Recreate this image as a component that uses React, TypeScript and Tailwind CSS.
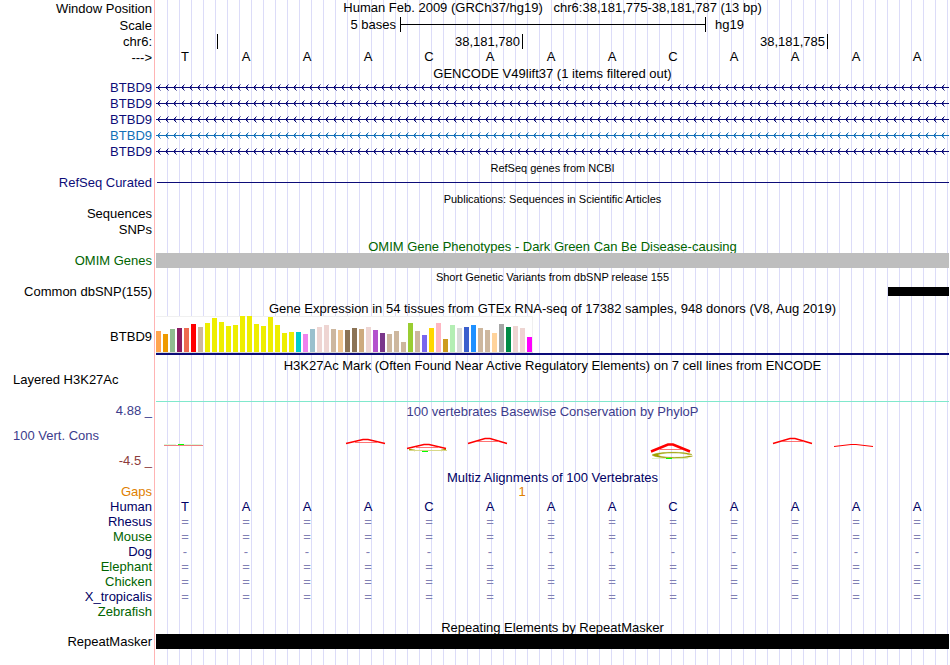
import type { ReactNode } from 'react';
import clsx from 'clsx';

type TrackRowProps = {
  label?: ReactNode;
  labelClass?: string;
  height?: string;
  children?: ReactNode;
};

type Mark = {
  peak?: [top: number, bottom: number, stroke: number];
  bar?: number;
  extra?: 'flat' | 'line' | 'ring';
};

const BASES = ['T', 'A', 'A', 'A', 'C', 'A', 'A', 'A', 'C', 'A', 'A', 'A', 'A'];

const GENCODE_ITEMS = [
  { id: 1, text: 'text-[#0c0c78]' },
  { id: 2, text: 'text-[#0c0c78]' },
  { id: 3, text: 'text-[#0c0c78]' },
  { id: 4, text: 'text-[#1270b8]' },
  { id: 5, text: 'text-[#0c0c78]' },
];

const SPECIES = [
  { name: 'Rhesus', symbol: '=', text: 'text-[#000064]' },
  { name: 'Mouse', symbol: '=', text: 'text-[#006400]' },
  { name: 'Dog', symbol: '-', text: 'text-[#000064]' },
  { name: 'Elephant', symbol: '=', text: 'text-[#006400]' },
  { name: 'Chicken', symbol: '=', text: 'text-[#006400]' },
  { name: 'X_tropicalis', symbol: '=', text: 'text-[#000064]' },
  { name: 'Zebrafish', symbol: '', text: 'text-[#006400]' },
];

// [height, color] for each tissue
const TISSUES: Array<[number, string]> = [
  [21, '#ffa54f'], [18, '#ee9a00'], [23, '#8fbc8f'], [24, '#8b1c62'], [24, '#ee6a50'], [28, '#ff0000'],
  [25, '#cdb79e'], [29, '#eeee00'], [34, '#eeee00'], [30, '#eeee00'], [26, '#eeee00'], [27, '#eeee00'],
  [36, '#eeee00'], [36, '#eeee00'], [28, '#eeee00'], [26, '#eeee00'], [35, '#eeee00'], [27, '#eeee00'],
  [19, '#eeee00'], [20, '#eeee00'], [20, '#00cdcd'], [18, '#ee82ee'], [23, '#9ac0cd'], [25, '#eed5d2'],
  [27, '#eed5d2'], [23, '#cdb79e'], [22, '#eec591'], [22, '#8b7355'], [24, '#8b7355'], [23, '#cdaa7d'],
  [25, '#eed5d2'], [22, '#b452cd'], [19, '#7a378b'], [18, '#cdb79e'], [21, '#cdb79e'], [10, '#cdb79e'],
  [29, '#9acd32'], [21, '#cdb79e'], [17, '#7a67ee'], [24, '#ffd700'], [29, '#ffb6c1'], [13, '#cd9b1d'],
  [27, '#b4eeb4'], [24, '#d9d9d9'], [25, '#3a5fcd'], [27, '#1e90ff'], [24, '#cdb79e'], [22, '#cdb79e'],
  [19, '#ffd39b'], [28, '#a6a6a6'], [25, '#008b45'], [26, '#eed5d2'], [24, '#eed5d2'], [15, '#ff00ff'],
];

const CONSERVATION: Record<number, Mark> = {
  0: { extra: 'flat' },
  3: { peak: [3, 7, 1.5], bar: 6.5 },
  4: { peak: [8, 12, 1.5], bar: 11.5, extra: 'line' },
  5: { peak: [2, 7, 1.5], bar: 5.5 },
  8: { peak: [8, 15, 2.5], bar: 13.5, extra: 'ring' },
  10: { peak: [2, 7, 1.5], bar: 5.5 },
  11: { peak: [8, 10, 1] },
};

function TrackRow({ label, labelClass, height, children }: TrackRowProps) {
  return (
    <div className={clsx('flex', height)}>
      <div className={clsx('flex w-[154px] shrink-0 items-start justify-end pr-0.5', labelClass)}>{label}</div>
      <div className="min-w-0 grow border-l border-[#ffb4b4] px-px">
        <div className="h-full bg-[repeating-linear-gradient(to_right,transparent_0_11px,#dcdcf8_11px_12px)]">
          {children}
        </div>
      </div>
    </div>
  );
}

function TitleRow({ small, className, children }: { small?: boolean; className?: string; children: ReactNode }) {
  return (
    <TrackRow height="h-[15px]">
      <h2 className={clsx('text-center leading-[17px] whitespace-pre', small && 'text-[11px]', className)}>
        {children}
      </h2>
    </TrackRow>
  );
}

function BaseCells({ cells, className }: { cells: string[]; className?: string }) {
  return (
    <div className={clsx('grid grid-cols-13 text-center', className)}>
      {cells.map((cell, i) => (
        <span key={i} className="pr-[3px]">
          {cell}
        </span>
      ))}
    </div>
  );
}

function IntronLine({ id }: { id: number }) {
  return (
    <svg className="block h-4 w-full" shapeRendering="crispEdges" aria-hidden="true">
      <defs>
        <pattern id={`chevrons-${id}`} width="8" height="16" patternUnits="userSpaceOnUse">
          <path d="M2 6h1v1h-1z M2 8h1v1h-1z M3 5h1v1h-1z M3 9h1v1h-1z" fill="currentColor" />
          <path d="M4 4h1v1h-1z M4 10h1v1h-1z M3 6h1v1h-1z M3 8h1v1h-1z" fill="currentColor" fillOpacity="0.5" />
        </pattern>
      </defs>
      <rect width="100%" height="16" fill={`url(#chevrons-${id})`} />
      <rect y="7" width="100%" height="1" fill="currentColor" />
    </svg>
  );
}

function ConservationMark({ mark }: { mark?: Mark }) {
  if (!mark) return <span />;

  return (
    <svg width="54" height="24" viewBox="0 0 54 24" className="block" aria-hidden="true">
      {mark.extra === 'flat' && (
        <>
          <path d="M8 9.5 H47" stroke="#f08080" strokeWidth="1" />
          <path d="M8 8.5 H20 M28 8.5 H46" stroke="#d8f8d8" strokeWidth="1" />
          <path d="M22 8.5 H28" stroke="#00ff00" strokeWidth="1" />
        </>
      )}
      {mark.extra === 'line' && (
        <>
          <path d="M9 13.5 L15 14.5 M41 14.5 L46 13.5" stroke="#a0a000" strokeWidth="1.5" />
          <path d="M9 14.5 H47" stroke="#d8d888" strokeWidth="1" />
          <path d="M22 15.5 H28" stroke="#00ff00" strokeWidth="1" />
        </>
      )}
      {mark.extra === 'ring' && (
        <>
          <path
            d="M48 18.5 C42 15.5 13 15.5 8 19 C13 23 42 23 48.5 20 L45 20 C40 22 16 22 14 19 C16 16.5 38 16.5 44 18.5 Z"
            fill="#a0a000"
            stroke="#a0a000"
            strokeWidth="0.4"
          />
          <path d="M8 22.5 H44" stroke="#c8f0a0" strokeWidth="0.6" />
          <path d="M22 22.5 H28" stroke="#00ff00" strokeWidth="1" />
        </>
      )}
      {mark.peak && (
        <polyline
          points={`7,${mark.peak[1] + 0.5} 24,${mark.peak[0] + 0.5} 29,${mark.peak[0] + 0.5} 46,${mark.peak[1] + 0.5}`}
          fill="none"
          stroke="#ff0000"
          strokeWidth={mark.peak[2]}
        />
      )}
      {mark.bar && <path d={`M16 ${mark.bar} H38`} stroke="#ff5050" strokeWidth="0.8" />}
    </svg>
  );
}

export default function App() {
  return (
    <main className="flex min-h-screen flex-col overflow-hidden bg-white font-['Liberation_Sans',Arial,sans-serif] text-[13px] leading-[15px] text-black">
      <TrackRow label="Window Position" labelClass="items-center!" height="h-[17px]">
        <h1 className="text-center whitespace-pre">Human Feb. 2009 (GRCh37/hg19)   chr6:38,181,775-38,181,787 (13 bp)</h1>
      </TrackRow>

      <TrackRow label="Scale" labelClass="items-center!" height="h-[17px]">
        <div className="grid grid-cols-13">
          <span className="col-span-4 pr-1 text-right">5 bases</span>
          <div className="col-span-5 -mr-px flex items-center border-x border-black">
            <div className="h-px w-full bg-black" />
          </div>
          <span className="col-span-4 pl-2.5">hg19</span>
        </div>
      </TrackRow>

      <TrackRow label="chr6:" height="h-[15px]">
        <div className="grid grid-cols-13">
          <span className="col-start-2 border-l border-black" />
          <span className="col-span-4 pr-0.5 text-right">38,181,780</span>
          <span className="col-span-5 border-l border-black pr-0.5 text-right">38,181,785</span>
          <span className="col-span-2 border-l border-black" />
        </div>
      </TrackRow>

      <TrackRow label="--->" labelClass="items-center!" height="h-4">
        <BaseCells cells={BASES} />
      </TrackRow>

      <TitleRow>GENCODE V49lift37 (1 items filtered out)</TitleRow>
      {GENCODE_ITEMS.map((item) => (
        <TrackRow key={item.id} label="BTBD9" labelClass={item.text} height="h-4">
          <div className={item.text}>
            <IntronLine id={item.id} />
          </div>
        </TrackRow>
      ))}

      <TitleRow small>RefSeq genes from NCBI</TitleRow>
      <TrackRow label="RefSeq Curated" labelClass="text-[#0c0c78]" height="h-4">
        <div className="flex h-[15px] items-center pl-px">
          <div className="h-px w-full bg-[#0c0c78]" />
        </div>
      </TrackRow>

      <TitleRow small>Publications: Sequences in Scientific Articles</TitleRow>
      <TrackRow label="Sequences" height="h-4" />
      <TrackRow label="SNPs" height="h-4" />

      <TitleRow className="text-[#006400]">OMIM Gene Phenotypes - Dark Green Can Be Disease-causing</TitleRow>
      <TrackRow label="OMIM Genes" labelClass="text-[#006400]" height="h-4">
        <div className="h-[15px] bg-[#bebebe]" />
      </TrackRow>

      <TitleRow small>Short Genetic Variants from dbSNP release 155</TitleRow>
      <TrackRow label="Common dbSNP(155)" height="h-4">
        <div className="grid grid-cols-13 pt-[3px]">
          <div className="col-start-13 h-[9px] bg-black" />
        </div>
      </TrackRow>

      <TrackRow height="h-4">
        <h2 className="text-center leading-[17px]">
          Gene Expression in 54 tissues from GTEx RNA-seq of 17382 samples, 948 donors (V8, Aug 2019)
        </h2>
      </TrackRow>
      <TrackRow label="BTBD9" labelClass="items-center!" height="h-[41px]">
        <div className="flex h-[37px] w-[377px] items-end gap-0.5 border-b border-[#d8d8d8] bg-white shadow-[inset_-1px_1px_#f0f0f0]">
          {TISSUES.map(([height, color], i) => (
            <div key={i} className="w-[5px]" style={{ height, backgroundColor: color }} />
          ))}
        </div>
        <div className="h-0.5 bg-[#0c0c78]" />
      </TrackRow>

      <TitleRow>H3K27Ac Mark (Often Found Near Active Regulatory Elements) on 7 cell lines from ENCODE</TitleRow>
      <TrackRow label="Layered H3K27Ac" labelClass="justify-start! pl-[13px]" height="h-[30px]">
        <div className="flex h-full items-end">
          <div className="h-px w-full bg-[#80e8cc]" />
        </div>
      </TrackRow>

      <TrackRow
        labelClass="flex-col items-stretch! gap-[10px] justify-start! pt-px pl-[13px]"
        label={
          <>
            <span className="text-right text-[#3c3c8c]">4.88 _</span>
            <span className="text-[#3c3c8c]">100 Vert. Cons</span>
            <span className="text-right text-[#8c3c3c]">-4.5 _</span>
          </>
        }
        height="h-[67px]"
      >
        <h2 className="pt-0.5 text-center text-[#3c3c8c]">100 vertebrates Basewise Conservation by PhyloP</h2>
        <div className="grid grid-cols-13 pt-[17px]">
          {BASES.map((_, i) => (
            <ConservationMark key={i} mark={CONSERVATION[i]} />
          ))}
        </div>
      </TrackRow>

      <TitleRow className="text-[#000064]">Multiz Alignments of 100 Vertebrates</TitleRow>
      <TrackRow label="Gaps" labelClass="text-[#e08000]" height="h-[15px]">
        <div className="grid grid-cols-13 text-center text-[#e08000]">
          <span className="col-span-2 col-start-6">1</span>
        </div>
      </TrackRow>
      <TrackRow label="Human" labelClass="text-[#000064]" height="h-[15px]">
        <BaseCells cells={BASES} className="text-[#000064]" />
      </TrackRow>
      {SPECIES.map((species) => (
        <TrackRow key={species.name} label={species.name} labelClass={species.text} height="h-[15px]">
          <BaseCells cells={BASES.map(() => species.symbol)} className="text-[#8080b4]" />
        </TrackRow>
      ))}

      <TitleRow>Repeating Elements by RepeatMasker</TitleRow>
      <TrackRow label="RepeatMasker" height="h-[15px]">
        <div className="h-full bg-black" />
      </TrackRow>
      <TrackRow height="min-h-4 grow" />
    </main>
  );
}
